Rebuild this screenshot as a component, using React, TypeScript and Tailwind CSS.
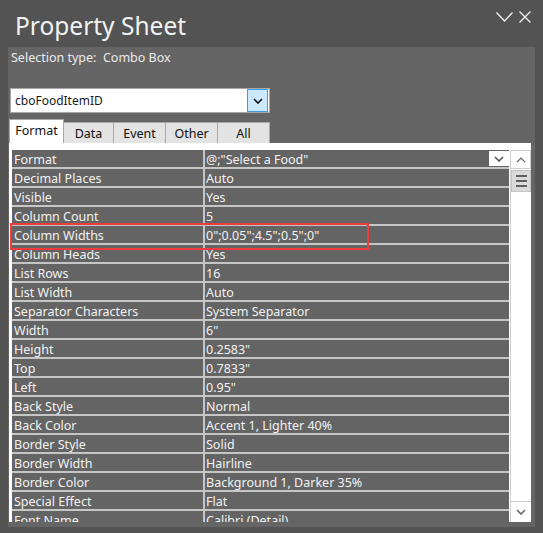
import React from "react";

const rows: [string, string][] = [
  ["Format", '@;"Select a Food"'],
  ["Decimal Places", "Auto"],
  ["Visible", "Yes"],
  ["Column Count", "5"],
  ["Column Widths", '0";0.05";4.5";0.5";0"'],
  ["Column Heads", "Yes"],
  ["List Rows", "16"],
  ["List Width", "Auto"],
  ["Separator Characters", "System Separator"],
  ["Width", '6"'],
  ["Height", '0.2583"'],
  ["Top", '0.7833"'],
  ["Left", '0.95"'],
  ["Back Style", "Normal"],
  ["Back Color", "Accent 1, Lighter 40%"],
  ["Border Style", "Solid"],
  ["Border Width", "Hairline"],
  ["Border Color", "Background 1, Darker 35%"],
  ["Special Effect", "Flat"],
  ["Font Name", "Calibri (Detail)"],
];

const tabs = ["Data", "Event", "Other", "All"];
const tabW = ["w-[50px]", "w-[52px]", "w-[52px]", "w-[52px]"];

function Chevron({ className, color = "#333" }: { className?: string; color?: string }) {
  return (
    <svg viewBox="0 0 10 6" className={className} fill="none" stroke={color} strokeWidth="1.6">
      <path d="M1 1 L5 5 L9 1" />
    </svg>
  );
}

export default function App() {
  return (
    <div
      className="w-[543px] h-[533px] bg-[#535353] overflow-hidden relative"
      style={{ fontFamily: '"Noto Sans", "Open Sans", sans-serif' }}
    >
      {/* title bar */}
      <div className="h-[47px] flex items-start justify-between">
        <div className="pl-[15px] pt-[10px] text-[24.5px] leading-[32px] text-[#f2f2f2]">Property Sheet</div>
        <div className="flex items-center gap-[6px] pt-[11px] pr-[12px]">
          <svg viewBox="0 0 17 10" className="w-[17px] h-[10px]" fill="none" stroke="#f2f2f2" strokeWidth="1.3">
            <path d="M0.5 0.5 L8.5 9 L16.5 0.5" />
          </svg>
          <svg viewBox="0 0 12 12" className="w-[12px] h-[12px]" fill="none" stroke="#f2f2f2" strokeWidth="1.3">
            <path d="M0.5 0.5 L11.5 11.5 M11.5 0.5 L0.5 11.5" />
          </svg>
        </div>
      </div>

      {/* panel */}
      <div className="ml-[8px] w-[527px] h-[480px] bg-[#656565] flex flex-col">
        <div className="pl-[3px] pt-[3px] h-[41px] text-[12.5px] leading-[16px] text-[#ececec]">
          Selection type:&nbsp;&nbsp;Combo Box
        </div>

        {/* combo */}
        <div className="ml-[2px] w-[260px] h-[25px] bg-white border border-[#a8a8a8] flex items-center">
          <div className="flex-1 pl-[4px] text-[12px] text-[#1a1a1a]">cboFoodItemID</div>
          <div className="w-[21px] h-[23px] mr-[1px] bg-[#cce8ff] border border-[#3c9bea] flex items-center justify-center">
            <Chevron className="w-[10px] h-[6px]" color="#111" />
          </div>
        </div>

        {/* tabs */}
        <div className="mt-[6px] ml-[1px] flex items-end h-[24px]">
          <div className="w-[55px] h-[24px] bg-white border-t border-l border-r border-[#a8a8a8] flex items-center justify-center text-[12.5px] text-[#111]">
            Format
          </div>
          {tabs.map((t, i) => (
            <div
              key={t}
              className={`${tabW[i]} h-[21px] bg-[#e3e3e3] border-t border-r border-[#a8a8a8] flex items-center justify-center text-[12.5px] text-[#111] pt-[2px]`}
            >
              {t}
            </div>
          ))}
        </div>

        {/* white content */}
        <div className="ml-[1px] w-[522px] h-[379px] bg-white flex pt-[7px]">
          <div className="ml-[3px] w-[497px] h-[372px] overflow-hidden bg-[#c6c6c6] flex flex-col gap-[2px]">
            {rows.map(([k, v], i) => (
              <div key={k} className="flex gap-[2px] h-[17px] shrink-0">
                <div className="w-[191px] bg-[#646464] pl-[2px] pt-[3px] text-[12.5px] leading-[14px] text-[#f2f2f2] whitespace-nowrap">
                  {k}
                </div>
                <div className="flex-1 bg-[#646464] pl-[1px] text-[12.5px] leading-[14px] text-[#f2f2f2] whitespace-nowrap flex items-start">
                  <span className="flex-1 pt-[3px]">{v}</span>
                  {i === 0 && (
                    <span className="w-[20px] h-[15px] mt-[1px] bg-white flex items-center justify-center">
                      <Chevron className="w-[10px] h-[6px]" color="#555" />
                    </span>
                  )}
                </div>
              </div>
            ))}
          </div>
          {/* scrollbar */}
          <div className="ml-[1px] w-[21px] h-[372px] flex flex-col border-l border-[#d0d0d0]">
            <div className="h-[19px] border-t border-b border-r border-[#cfcfcf] bg-white flex items-center justify-center">
              <svg viewBox="0 0 10 6" className="w-[10px] h-[6px]" fill="none" stroke="#666" strokeWidth="1.2">
                <path d="M1 5 L5 1 L9 5" />
              </svg>
            </div>
            <div className="mt-[1px] h-[22px] bg-[#dadada] border border-[#c4c4c4] flex flex-col items-center justify-center gap-[3px]">
              <div className="w-[11px] h-[2px] bg-[#606060]" />
              <div className="w-[11px] h-[2px] bg-[#606060]" />
              <div className="w-[11px] h-[2px] bg-[#606060]" />
            </div>
            <div className="flex-1 bg-white" />
            <div className="h-[21px] border-t border-[#cfcfcf] bg-white flex items-center justify-center">
              <Chevron className="w-[10px] h-[6px]" color="#666" />
            </div>
          </div>
        </div>
      </div>

      {/* highlight box */}
      <div className="absolute left-[10px] top-[223px] w-[359px] h-[27px] border-2 border-[#ef3b3b] pointer-events-none" />
    </div>
  );
}
